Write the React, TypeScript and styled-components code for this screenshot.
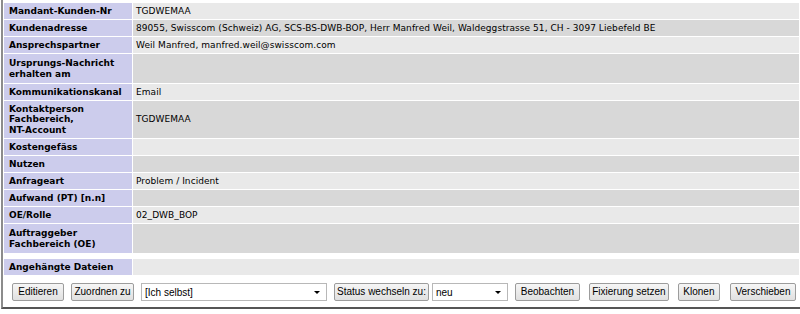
import React from "react";
import styled, { createGlobalStyle } from "styled-components";

const GlobalStyle = createGlobalStyle`
  body {
    margin: 0;
    padding: 0;
    background: #fff;
    font-family: "DejaVu Sans", Verdana, sans-serif;
  }
`;

const Frame = styled.div`
  border-left: 2px solid #8c8c8c;
  border-bottom: 2px solid #555;
  margin-left: 1px;
  padding: 2px 0 0 0;
`;

const Table = styled.table`
  width: 100%;
  border-collapse: separate;
  border-spacing: 1px;
  color: #000;
`;

// row heights taken from the original form: one, two or three lines of label
const rowHeight = (lines: number) => (lines === 3 ? 37 : lines === 2 ? 29 : 16);

const LabelCell = styled.td<{ $lines: number }>`
  width: 128px;
  height: ${({ $lines }) => rowHeight($lines)}px;
  box-sizing: border-box;
  background: #ccccec;
  font-size: 9px;
  font-weight: bold;
  padding: 0 3px 0 5px;
  line-height: 10.5px;
  vertical-align: middle;
`;

const ValueCell = styled.td<{ $dark?: boolean }>`
  background: ${({ $dark }) => ($dark ? "#d8d8d8" : "#e9e9e9")};
  font-size: 9px;
  letter-spacing: 0.06px;
  padding: 0 3px;
  line-height: 11px;
  vertical-align: middle;
`;

const SpacerCell = styled.td`
  height: 4px;
  padding: 0;
`;

const Actions = styled.div`
  display: flex;
  align-items: center;
  gap: 7px;
  padding: 7px 0 6px 9px;
  font-family: "Liberation Sans", Arial, sans-serif;
  font-size: 10px;
  white-space: nowrap;
`;

const Button = styled.button<{ $width: number; $shift?: number }>`
  flex: 0 0 auto;
  min-width: ${({ $width }) => $width}px;
  margin-left: ${({ $shift }) => $shift ?? 0}px;
  height: 18px;
  padding: 0 2px;
  box-sizing: border-box;
  border: 1px solid #9c9c9c;
  border-radius: 2px;
  background: linear-gradient(#f6f6f6, #e0e0e0);
  font-family: "Liberation Sans", Arial, sans-serif;
  font-size: 10px;
  color: #000;
  line-height: 16px;
  white-space: nowrap;
`;

const Select = styled.div<{ $width: number; $shift?: number }>`
  flex: 0 0 auto;
  width: ${({ $width }) => $width}px;
  margin-left: ${({ $shift }) => $shift ?? 0}px;
  height: 18px;
  box-sizing: border-box;
  border: 1px solid #b8b8b8;
  background: #fff;
  display: flex;
  align-items: center;
  justify-content: space-between;
  padding: 0 6px 0 3px;
  font-size: 10px;
`;

const Arrow = styled.span`
  width: 0;
  height: 0;
  border-left: 3px solid transparent;
  border-right: 3px solid transparent;
  border-top: 3px solid #000;
`;

type Row = { label: string[]; value?: string };

const rows: Row[] = [
  { label: ["Mandant-Kunden-Nr"], value: "TGDWEMAA" },
  {
    label: ["Kundenadresse"],
    value:
      "89055, Swisscom (Schweiz) AG, SCS-BS-DWB-BOP, Herr Manfred Weil, Waldeggstrasse 51, CH - 3097 Liebefeld BE",
  },
  { label: ["Ansprechspartner"], value: "Weil Manfred, manfred.weil@swisscom.com" },
  { label: ["Ursprungs-Nachricht", "erhalten am"] },
  { label: ["Kommunikationskanal"], value: "Email" },
  { label: ["Kontaktperson", "Fachbereich,", "NT-Account"], value: "TGDWEMAA" },
  { label: ["Kostengefäss"] },
  { label: ["Nutzen"] },
  { label: ["Anfrageart"], value: "Problem / Incident" },
  { label: ["Aufwand (PT) [n.n]"] },
  { label: ["OE/Rolle"], value: "02_DWB_BOP" },
  { label: ["Auftraggeber", "Fachbereich (OE)"] },
];

export default function App() {
  return (
    <>
      <GlobalStyle />
      <Frame>
        <Table>
          <tbody>
            {rows.map((row, i) => (
              <tr key={i}>
                <LabelCell $lines={row.label.length}>
                  {row.label.map((line, j) => (
                    <React.Fragment key={j}>
                      {j > 0 && <br />}
                      {line}
                    </React.Fragment>
                  ))}
                </LabelCell>
                <ValueCell $dark={i % 2 === 1}>{row.value}</ValueCell>
              </tr>
            ))}
            <tr>
              <SpacerCell colSpan={2} />
            </tr>
            <tr>
              <LabelCell $lines={1}>Angehängte Dateien</LabelCell>
              <ValueCell />
            </tr>
          </tbody>
        </Table>
        <Actions>
          <Button $width={52}>Editieren</Button>
          <Button $width={63}>Zuordnen zu</Button>
          <Select $width={186}>
            [Ich selbst]
            <Arrow />
          </Select>
          <Button $width={94}>Status wechseln zu:</Button>
          <Select $width={76} $shift={-4}>
            neu
            <Arrow />
          </Select>
          <Button $width={65}>Beobachten</Button>
          <Button $width={80} $shift={2}>Fixierung setzen</Button>
          <Button $width={42} $shift={2}>Klonen</Button>
          <Button $width={66} $shift={3}>Verschieben</Button>
        </Actions>
      </Frame>
    </>
  );
}
